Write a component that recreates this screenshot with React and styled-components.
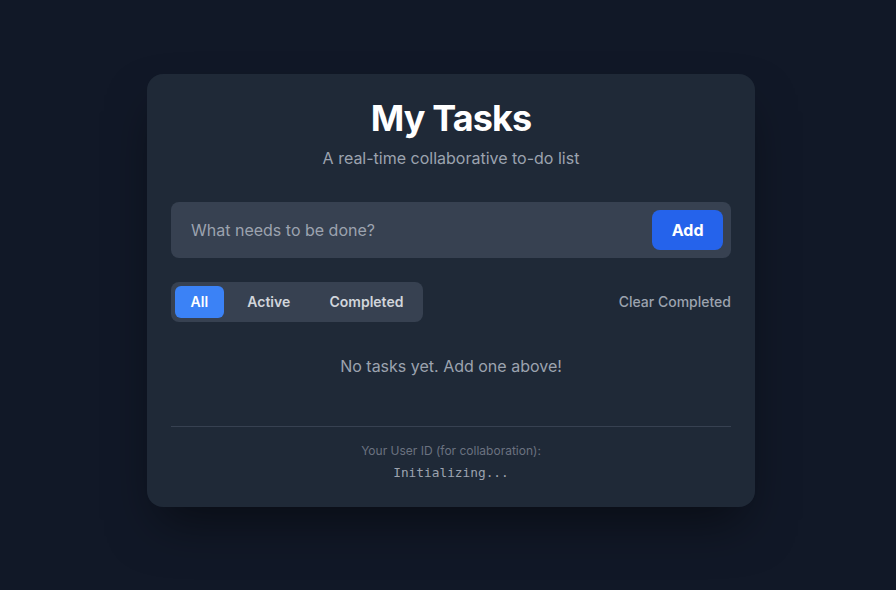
import React, { useState } from 'react';
import styled, { createGlobalStyle } from 'styled-components';

const GlobalStyle = createGlobalStyle`
  * { box-sizing: border-box; }
  body {
    margin: 0;
    background: #111827;
    font-family: Inter, "Noto Sans", sans-serif;
    color: #f3f4f6;
  }
`;

const Page = styled.div`
  min-height: 100vh;
  display: flex;
  align-items: center;
  justify-content: center;
  padding: 0 0 10px 6px;
`;

const Card = styled.div`
  width: 608px;
  background: #1f2937;
  border-radius: 16px;
  padding: 24px;
  box-shadow: 0 25px 50px -12px rgba(0, 0, 0, 0.5);
`;

const Header = styled.div`
  text-align: center;
  margin-bottom: 32px;

  h1 {
    margin: 0;
    font-size: 36px;
    line-height: 40px;
    font-weight: 700;
    letter-spacing: -0.9px;
    color: #ffffff;
  }
  p {
    margin: 8px 0 0;
    font-size: 16px;
    line-height: 24px;
    color: #9ca3af;
  }
`;

const InputRow = styled.form`
  display: flex;
  align-items: center;
  background: #374151;
  border-radius: 8px;
  padding: 8px;
  margin-bottom: 24px;
`;

const TaskInput = styled.input`
  flex: 1;
  background: transparent;
  border: none;
  outline: none;
  padding: 0 12px;
  font-family: inherit;
  font-size: 16px;
  color: #f3f4f6;
  &::placeholder { color: #9ca3af; }
`;

const AddButton = styled.button`
  height: 40px;
  padding: 0 19.5px;
  border: none;
  border-radius: 8px;
  background: #2563eb;
  color: #fff;
  font-family: inherit;
  font-size: 16px;
  font-weight: 700;
`;

const Toolbar = styled.div`
  display: flex;
  align-items: center;
  justify-content: space-between;
`;

const FilterGroup = styled.div`
  display: flex;
  gap: 8px;
  background: #374151;
  border-radius: 8px;
  padding: 4px;
`;

const FilterButton = styled.button`
  height: 32px;
  padding: 0 15.6px;
  border: none;
  border-radius: 6px;
  background: ${p => (p.$active ? '#3b82f6' : 'transparent')};
  color: ${p => (p.$active ? '#ffffff' : '#d1d5db')};
  font-family: inherit;
  font-size: 14px;
  font-weight: 600;
`;

const ClearButton = styled.button`
  border: none;
  background: transparent;
  padding: 0;
  color: #9ca3af;
  font-family: inherit;
  font-size: 14px;
  font-weight: 500;
`;

const Empty = styled.p`
  margin: 0;
  padding: 32px 0;
  text-align: center;
  font-size: 16px;
  line-height: 24px;
  color: #9ca3af;
`;

const Footer = styled.div`
  margin-top: 16px;
  padding-top: 16px;
  border-top: 1px solid #374151;
  text-align: center;

  .label {
    font-size: 12px;
    line-height: 16px;
    color: #6b7280;
  }
  .uid {
    margin-top: 4px;
    font-family: "DejaVu Sans Mono", "Liberation Mono", monospace;
    font-size: 12.8px;
    line-height: 20px;
    color: #9ca3af;
  }
`;

const filters = ['All', 'Active', 'Completed'];

export default function App() {
  const [filter, setFilter] = useState('All');
  return (
    <>
      <GlobalStyle />
      <Page>
        <Card>
          <Header>
            <h1>My Tasks</h1>
            <p>A real-time collaborative to-do list</p>
          </Header>
          <InputRow onSubmit={e => e.preventDefault()}>
            <TaskInput placeholder="What needs to be done?" />
            <AddButton type="submit">Add</AddButton>
          </InputRow>
          <Toolbar>
            <FilterGroup>
              {filters.map(f => (
                <FilterButton key={f} $active={filter === f} onClick={() => setFilter(f)}>
                  {f}
                </FilterButton>
              ))}
            </FilterGroup>
            <ClearButton>Clear Completed</ClearButton>
          </Toolbar>
          <Empty>No tasks yet. Add one above!</Empty>
          <Footer>
            <div className="label">Your User ID (for collaboration):</div>
            <div className="uid">Initializing...</div>
          </Footer>
        </Card>
      </Page>
    </>
  );
}
